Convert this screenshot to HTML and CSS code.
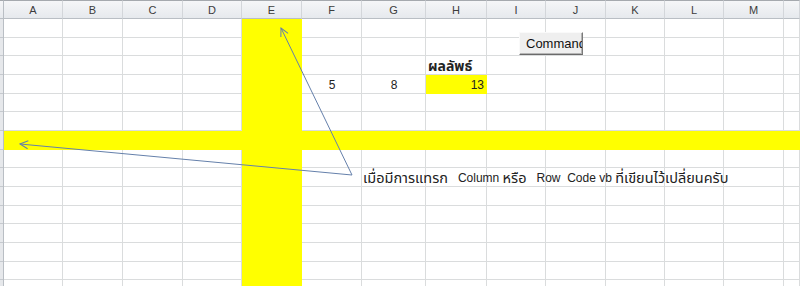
FILE: index.html
```html
<!DOCTYPE html>
<html lang="th">
<head>
    <meta charset="UTF-8">
    <meta name="viewport" content="width=device-width, initial-scale=1.0">
    <title>Sheet1</title>
    <link rel="stylesheet" href="styles.css">
</head>
<body>
    <div class="sheet">
        <!-- column headers -->
        <div class="corner"></div>
        <div class="head">A</div>
        <div class="head">B</div>
        <div class="head">C</div>
        <div class="head">D</div>
        <div class="head">E</div>
        <div class="head">F</div>
        <div class="head">G</div>
        <div class="head">H</div>
        <div class="head">I</div>
        <div class="head">J</div>
        <div class="head">K</div>
        <div class="head">L</div>
        <div class="head">M</div>
        <div class="head"></div>

        <!-- gridline stripes, one per column -->
        <div class="rowhead"></div>
        <div class="col c2"></div>
        <div class="col c3"></div>
        <div class="col c4"></div>
        <div class="col c5"></div>
        <div class="col c6"></div>
        <div class="col c7"></div>
        <div class="col c8"></div>
        <div class="col c9"></div>
        <div class="col c10"></div>
        <div class="col c11"></div>
        <div class="col c12"></div>
        <div class="col c13"></div>
        <div class="col c14"></div>
        <div class="col c15"></div>

        <!-- highlighted cells -->
        <div class="fill fill-col"></div>
        <div class="fill fill-row"></div>
        <div class="fill fill-result"></div>

        <!-- values -->
        <div class="cell center v-f4">5</div>
        <div class="cell center v-g4">8</div>
        <div class="cell v-h3"><span class="th label">ผลลัพธ์</span></div>
        <div class="cell right v-h4">13</div>
        <div class="cell note"><span class="th">เมื่อมีการแทรก</span>   Column <span class="th">หรือ</span>   Row  Code vb <span class="th">ที่เขียนไว้เปลี่ยนครับ</span></div>

        <button class="command" type="button">Command</button>

        <svg class="arrows" width="800" height="286" viewBox="0 0 800 286">
            <defs>
                <marker id="head" markerWidth="10" markerHeight="10" refX="9" refY="5" orient="auto" markerUnits="userSpaceOnUse">
                    <path d="M1,1 L9,5 L1,9" fill="none" stroke="#6580ab" stroke-width="1"/>
                </marker>
            </defs>
            <line x1="352" y1="175" x2="281" y2="28" stroke="#6580ab" stroke-width="1" marker-end="url(#head)"/>
            <line x1="352" y1="175" x2="20" y2="144" stroke="#6580ab" stroke-width="1" marker-end="url(#head)"/>
        </svg>
    </div>
</body>
</html>
```

FILE: styles.css
```css
body {
    margin: 0;
    padding: 0;
    background: #fff;
    font-family: "Liberation Sans", "Noto Sans Thai", "Noto Sans", sans-serif;
    color: #222;
}
.sheet {
    position: relative;
    display: grid;
    grid-template-columns: 4px 59px 60px 60px 59px 60px 60px 64px 61px 59px 60px 59px 59px 60px 1fr;
    grid-template-rows: 19px repeat(15, 18.667px);
    width: 800px;
    height: 286px;
    overflow: hidden;
}
.corner,
.head {
    grid-row: 1;
    box-sizing: border-box;
    background: linear-gradient(#f5f6f8, #e6e9ed);
    border-top: 1px solid #a5a9ae;
    border-bottom: 1px solid #b9bec4;
}
.head {
    border-right: 1px solid #d3d6da;
    display: flex;
    align-items: center;
    justify-content: center;
    font-size: 11px;
    color: #3c3c3c;
    padding-top: 1px;
}
.corner {
    border-right: 1px solid #b9bec4;
}
.rowhead {
    grid-column: 1;
    grid-row: 2 / -1;
    box-sizing: border-box;
    border-right: 1px solid #b9bec4;
    background: repeating-linear-gradient(#e6e8eb 0 17.667px, #c5c9ce 17.667px 18.667px);
}
.col {
    grid-row: 2 / -1;
    box-sizing: border-box;
    border-right: 1px solid #dadcdd;
    background: repeating-linear-gradient(#fff 0 17.667px, #dadcdd 17.667px 18.667px);
}
.c2 { grid-column: 2; }
.c3 { grid-column: 3; }
.c4 { grid-column: 4; }
.c5 { grid-column: 5; }
.c6 { grid-column: 6; }
.c7 { grid-column: 7; }
.c8 { grid-column: 8; }
.c9 { grid-column: 9; }
.c10 { grid-column: 10; }
.c11 { grid-column: 11; }
.c12 { grid-column: 12; }
.c13 { grid-column: 13; }
.c14 { grid-column: 14; }
.c15 { grid-column: 15; }
.fill {
    background: #ffff00;
}
.fill-col {
    grid-column: 6;
    grid-row: 2 / -1;
}
.fill-row {
    grid-column: 2 / -1;
    grid-row: 8;
}
.fill-result {
    grid-column: 9;
    grid-row: 5;
}
.cell {
    display: flex;
    align-items: flex-end;
    padding: 0 3px 2px;
    font-size: 12px;
    line-height: 14px;
    white-space: pre;
}
.th {
    font-size: 14.5px;
}
.label {
    font-size: 14px;
    font-weight: bold;
}
.center {
    justify-content: center;
}
.right {
    justify-content: flex-end;
}
.v-f4 { grid-column: 7; grid-row: 5; }
.v-g4 { grid-column: 8; grid-row: 5; }
.v-h3 { grid-column: 9; grid-row: 4; padding-left: 2px; }
.v-h4 { grid-column: 9; grid-row: 5; }
.note {
    grid-column: 8 / -1;
    grid-row: 10;
    padding-left: 1px;
}
.command {
    position: absolute;
    left: 519px;
    top: 32px;
    width: 64px;
    height: 23px;
    padding: 0 0 0 6px;
    box-sizing: border-box;
    overflow: hidden;
    text-align: left;
    background: #efefef;
    border: 1px solid;
    border-color: #fafafa #7a7a7a #6a6a6a #fafafa;
    box-shadow: inset -1px -1px 0 #b5b5b5;
    font-family: "Liberation Sans", sans-serif;
    font-size: 13px;
    color: #111;
    white-space: nowrap;
}
.arrows {
    position: absolute;
    left: 0;
    top: 0;
    pointer-events: none;
}
```
